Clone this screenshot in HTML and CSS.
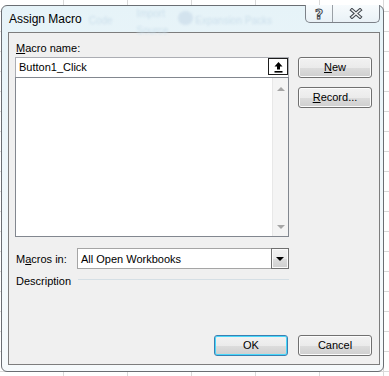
FILE: index.html
```html
<!DOCTYPE html>
<html lang="en">
<head>
    <meta charset="UTF-8">
    <title>Assign Macro</title>
    <link rel="stylesheet" href="styles.css">
</head>
<body>

    <div class="window">

        <div class="titlebar">
            <span class="title">Assign Macro</span>

            <!-- ribbon showing through the glass frame -->
            <div class="glass">
                <span class="ghost code">Code</span>
                <div class="ghost-col">
                    <span class="ghost">Import</span>
                    <span class="ghost">Source</span>
                </div>
                <span class="ghost-dot"></span>
                <span class="ghost packs">Expansion Packs</span>
            </div>

            <div class="caption">
                <div class="cap help"><span>?</span></div>
                <div class="cap close">
                    <svg width="14" height="11" viewBox="0 0 14 11">
                        <path d="M3 2 L11 9 M11 2 L3 9" stroke="#454b52" stroke-width="3.6" stroke-linecap="square" fill="none"/>
                        <path d="M3 2 L11 9 M11 2 L3 9" stroke="#f3f4f5" stroke-width="1.5" stroke-linecap="square" fill="none"/>
                    </svg>
                </div>
            </div>
        </div>

        <div class="client">

            <div class="top">
                <div class="main">
                    <div class="lbl"><u>M</u>acro name:</div>
                    <div class="namebox">
                        <span class="value">Button1_Click</span>
                        <div class="pick">
                            <svg width="9" height="12" viewBox="0 0 9 12">
                                <path d="M4.5 1 L8.5 5.5 H6 V8.5 H3 V5.5 H0.5 Z" fill="#000"/>
                                <rect x="0.5" y="10" width="8" height="1.6" fill="#000"/>
                            </svg>
                        </div>
                    </div>
                    <div class="list">
                        <div class="items"></div>
                        <div class="scroll">
                            <span class="arr up"></span>
                            <span class="arr down"></span>
                        </div>
                    </div>
                </div>

                <div class="side">
                    <div class="btn"><u>N</u>ew</div>
                    <div class="btn"><u>R</u>ecord...</div>
                </div>
            </div>

            <div class="row macros">
                <span class="lbl-in">M<u>a</u>cros in:</span>
                <div class="combo">
                    <span class="value">All Open Workbooks</span>
                    <div class="drop"><span class="tri"></span></div>
                </div>
            </div>

            <div class="row desc">
                <span>Description</span>
                <span class="rule"></span>
            </div>

            <div class="footer">
                <div class="btn default">OK</div>
                <div class="btn">Cancel</div>
            </div>

        </div>
    </div>

</body>
</html>
```

FILE: styles.css
```css
* {
    margin: 0;
    padding: 0;
    box-sizing: border-box;
}

body {
    width: 389px;
    height: 376px;
    overflow: hidden;
    font-family: "Liberation Sans", Arial, sans-serif;
    font-size: 11px;
    color: #000;
    background-color: #fff;
    background-image:
        linear-gradient(#d9d9d9 1px, transparent 1px),
        linear-gradient(90deg, #d9d9d9 1px, transparent 1px);
    background-size: 64px 20px;
    background-position: 0 11px, 63px 0;
}

/* window frame */

.window {
    margin: 5px 0 0 1px;
    width: 383px;
    height: 367px;
    border: 1px solid #6a6e73;
    border-radius: 6px;
    background: linear-gradient(#e6f3f8, #f1f8fb 60%, #f6fafc);
    padding: 0 3px 6px 6px;
    display: flex;
    flex-direction: column;
}

.titlebar {
    height: 26px;
    display: flex;
    align-items: flex-start;
    margin-left: -6px;
    margin-right: -3px;
}

.title {
    font-size: 12px;
    line-height: 16px;
    margin: 5px 0 0 7px;
    color: #000;
}

.glass {
    flex: 1;
    display: flex;
    align-items: flex-start;
    color: #cde0ec;
    font-size: 10px;
    filter: blur(0.9px);
}

.ghost.code {
    margin: 9px 0 0 7px;
}

.ghost-col {
    display: flex;
    flex-direction: column;
    margin-left: 24px;
    gap: 6px;
    margin-top: 2px;
}

.ghost-dot {
    width: 15px;
    height: 14px;
    border-radius: 50%;
    background: #d3e3ee;
    margin: 5px 0 0 10px;
}

.ghost.packs {
    margin: 9px 0 0 2px;
}

.caption {
    display: flex;
    margin: -1px 3px 0 0;
    height: 18px;
    border: 1px solid #7c8188;
    border-top: none;
    border-radius: 0 0 5px 5px;
    background: linear-gradient(#f7fbfd, #e9f1f6);
    overflow: hidden;
}

.cap {
    display: flex;
    align-items: center;
    justify-content: center;
    height: 100%;
}

.help {
    width: 27px;
    border-right: 1px solid #9aa0a6;
}

.help span {
    font-family: "DejaVu Sans", sans-serif;
    font-weight: bold;
    font-size: 14px;
    line-height: 14px;
    color: #f4f5f6;
    -webkit-text-stroke: 1px #454b52;
    margin-top: 1px;
}

.close {
    width: 46px;
}

/* client area */

.client {
    height: 333px;
    width: 372px;
    border: 1px solid #7d7d7d;
    background: #f0f0f0;
    padding: 7px 7px 8px 6px;
    display: flex;
    flex-direction: column;
}

.top {
    display: flex;
    gap: 9px;
}

.main {
    width: 274px;
}

.lbl {
    height: 17px;
    line-height: 17px;
    padding-left: 1px;
}

.namebox {
    height: 20px;
    border: 1px solid #abadb3;
    border-bottom: none;
    background: #fff;
    display: flex;
    align-items: flex-start;
}

.namebox .value {
    flex: 1;
    line-height: 19px;
    padding-left: 3px;
}

.pick {
    width: 20px;
    height: 17px;
    border: 1px solid #1e1e1e;
    box-shadow: inset 0 0 0 1px #fff;
    background: #fff;
    display: flex;
    align-items: center;
    justify-content: center;
}

.list {
    height: 160px;
    border: 1px solid #82878f;
    background: #fff;
    display: flex;
}

.items {
    flex: 1;
}

.scroll {
    width: 16px;
    background: #f4f4f4;
    border-left: 1px solid #e8e8e8;
    display: flex;
    flex-direction: column;
    justify-content: space-between;
    align-items: center;
    padding: 9px 0 7px;
}

.arr {
    width: 0;
    height: 0;
    border-left: 4px solid transparent;
    border-right: 4px solid transparent;
}

.arr.up {
    border-bottom: 4px solid #a6a6a6;
}

.arr.down {
    border-top: 4px solid #a6a6a6;
}

.side {
    width: 74px;
    padding-top: 17px;
    display: flex;
    flex-direction: column;
    gap: 9px;
}

.btn {
    height: 21px;
    border: 1px solid #707070;
    border-radius: 3px;
    background: linear-gradient(#f2f2f2, #ebebeb 50%, #dddddd 51%, #cfcfcf);
    box-shadow: inset 0 0 0 1px #fcfcfc;
    text-align: center;
    line-height: 19px;
}

.btn.default {
    border-color: #3c7fb1;
    box-shadow: inset 0 0 0 1px #48d8fb;
    background: linear-gradient(#f2f2f2, #ebebeb 50%, #dddddd 51%, #cfcfcf);
}

/* lower rows */

.row {
    display: flex;
}

.macros {
    margin-top: 11px;
    height: 21px;
    align-items: center;
}

.lbl-in {
    width: 62px;
    padding-left: 1px;
}

.combo {
    width: 212px;
    height: 21px;
    border: 1px solid #a5a5a5;
    background: #fff;
    display: flex;
    align-items: center;
}

.combo .value {
    flex: 1;
    padding-left: 3px;
}

.drop {
    width: 18px;
    height: 21px;
    margin: -1px -1px -1px 0;
    border: 1px solid #707070;
    box-shadow: inset 0 0 0 1px #fbfbfb;
    background: linear-gradient(#f2f2f2, #ebebeb 50%, #dddddd 51%, #cfcfcf);
    display: flex;
    align-items: center;
    justify-content: center;
}

.tri {
    width: 0;
    height: 0;
    border-left: 4px solid transparent;
    border-right: 4px solid transparent;
    border-top: 4px solid #000;
}

.desc {
    margin-top: 5px;
    height: 14px;
    line-height: 14px;
    padding-left: 1px;
}

.rule {
    flex: 1;
    height: 1px;
    background: #d5dfe5;
    margin: 5px 0 0 7px;
    max-width: 211px;
}

.footer {
    margin-top: auto;
    display: flex;
    justify-content: flex-end;
    gap: 10px;
}

.footer .btn {
    width: 74px;
}
```
